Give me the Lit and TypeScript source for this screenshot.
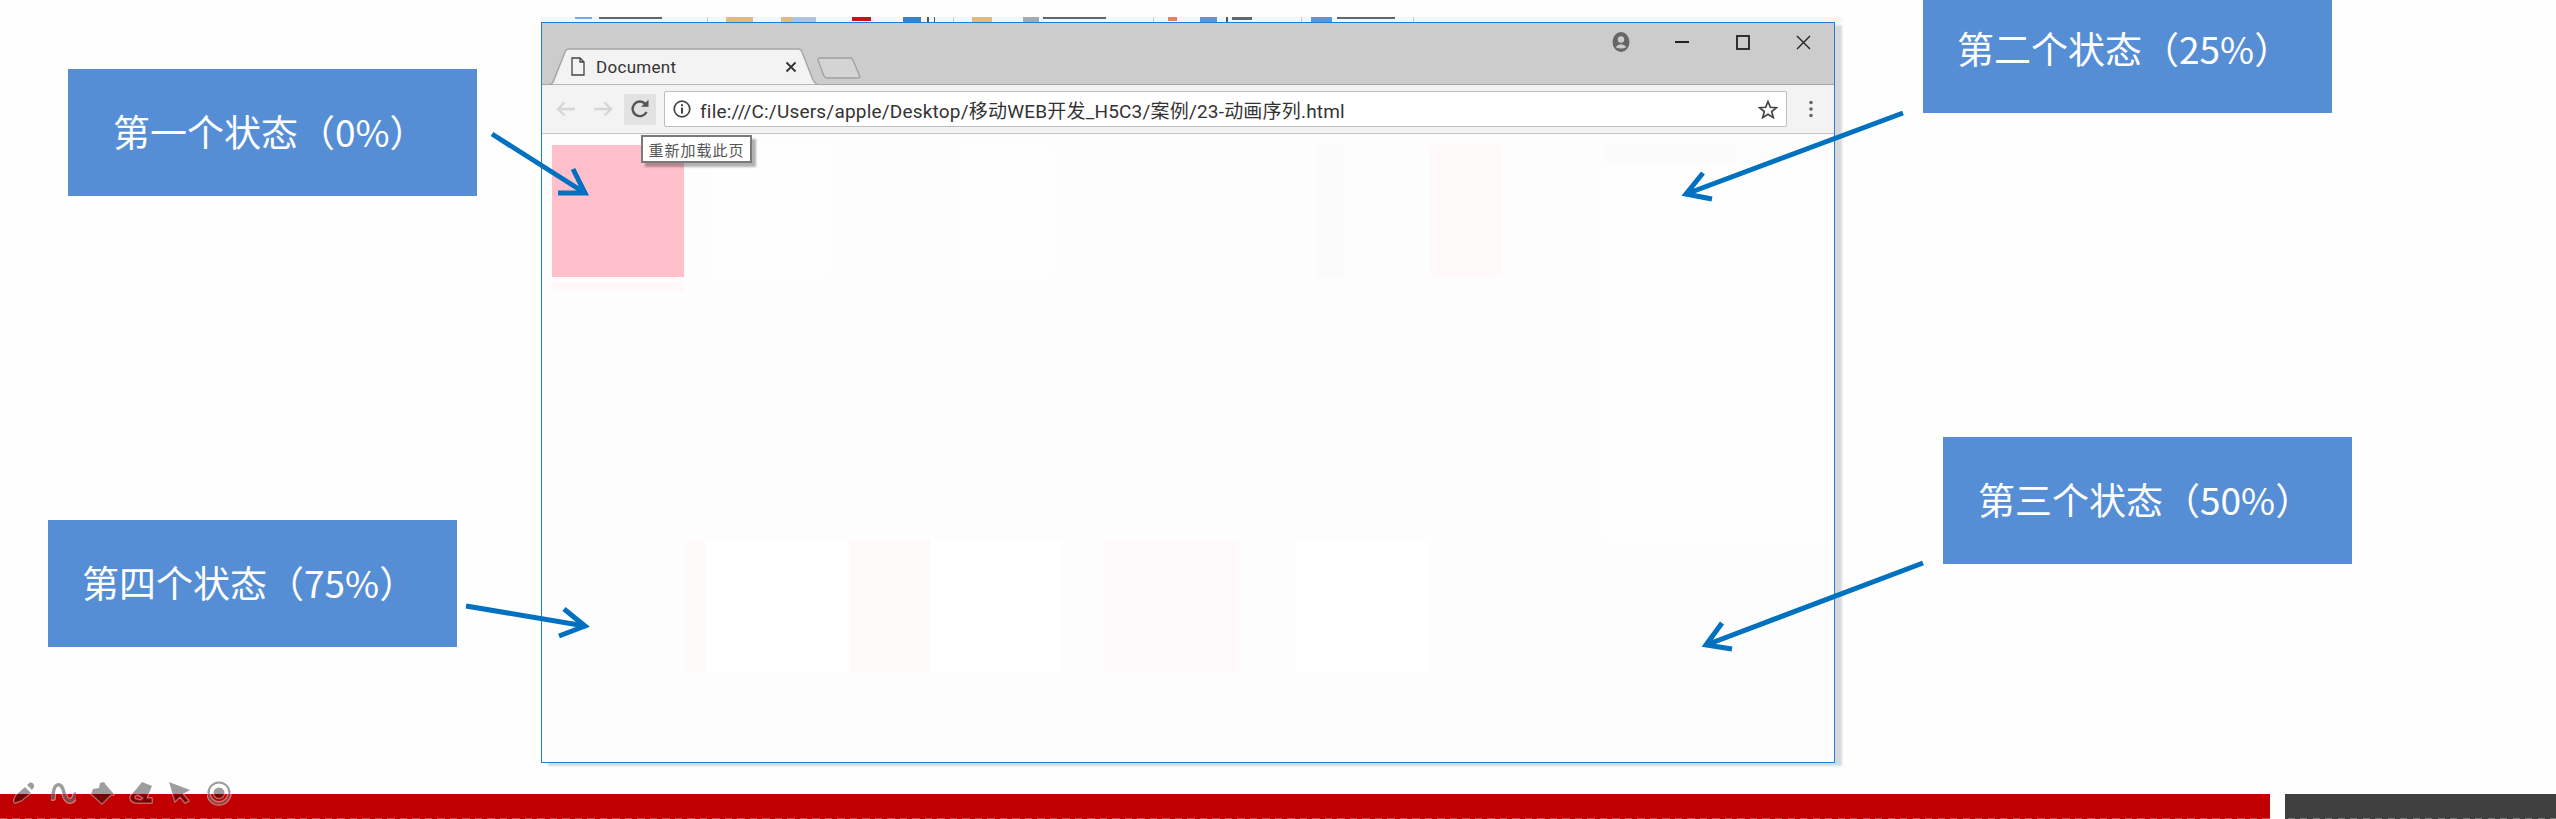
import { LitElement, html, css, svg } from "lit";
import { customElement } from "lit/decorators.js";

// faint leftovers of the animated box, page coordinates [x, y, w, h, colour]
const patches: [number, number, number, number, string][] = [
  [552, 145, 132, 132, "#ffc0cb"],
  [552, 282, 132, 9, "#fff8f8"],
  [711, 145, 117, 132, "#fefefe"],
  [963, 145, 88, 132, "#fefefe"],
  [1317, 145, 27, 132, "#fbfbfb"],
  [1430, 145, 72, 132, "#fffafa"],
  [1605, 145, 132, 18, "#fbfbfb"],
  [1605, 163, 229, 377, "#fefefe"],
  [684, 540, 21, 132, "#fffafa"],
  [705, 540, 144, 132, "#ffffff"],
  [849, 540, 81, 132, "#fffafa"],
  [930, 540, 131, 132, "#ffffff"],
  [1105, 540, 135, 132, "#fefafb"],
  [1295, 540, 133, 132, "#ffffff"],
];

// desktop bits peeking out above the browser window [x, w, h, colour]
const strip: [number, number, number, string][] = [
  [575, 17, 2, "#7fa8d8"],
  [599, 63, 2, "#666666"],
  [707, 1, 5, "#c8c8c8"],
  [726, 27, 5, "#e8b878"],
  [781, 12, 5, "#e8b878"],
  [793, 23, 5, "#a8c4e8"],
  [852, 19, 4, "#cc1111"],
  [903, 18, 5, "#2f86d0"],
  [927, 2, 5, "#555555"],
  [934, 1, 5, "#555555"],
  [953, 1, 5, "#c8c8c8"],
  [972, 20, 5, "#e8b878"],
  [1023, 16, 5, "#a8a8a8"],
  [1043, 63, 2, "#666666"],
  [1153, 1, 5, "#c8c8c8"],
  [1168, 9, 4, "#d88850"],
  [1200, 17, 5, "#5a96d8"],
  [1226, 2, 5, "#555555"],
  [1232, 20, 3, "#666666"],
  [1301, 1, 5, "#c8c8c8"],
  [1311, 21, 5, "#5a96d8"],
  [1337, 58, 2, "#666666"],
  [1413, 1, 5, "#c8c8c8"],
];

// shaft start, tip, two head ends
const arrows: number[][] = [
  [492, 134, 585, 193, 573, 169, 558, 193],
  [1903, 113, 1686, 194, 1703, 173, 1712, 199],
  [1923, 563, 1706, 645, 1722, 623, 1732, 649],
  [466, 606, 585, 626, 564, 609, 559, 636],
];

@customElement("app-root")
export class AppRoot extends LitElement {
  static styles = css`
    :host {
      display: flex;
      flex-direction: column;
      height: 819px;
      background: #fefefe;
      position: relative;
      overflow: hidden;
      font-family: "Noto Sans CJK SC", "Liberation Sans", sans-serif;
    }
    .stage {
      flex: 1;
      position: relative;
    }
    .strip {
      position: absolute;
      left: 541px;
      top: 17px;
      width: 1302px;
      height: 5px;
      background: #f6f6f6;
    }
    .strip i {
      position: absolute;
      top: 0;
    }
    .window {
      position: absolute;
      left: 541px;
      top: 22px;
      width: 1294px;
      height: 741px;
      box-sizing: border-box;
      border: 1px solid #1f7fd4;
      box-shadow: 7px 3px 2px rgba(0, 0, 0, 0.15);
      display: flex;
      flex-direction: column;
      background: #fdfdfd;
    }
    .tabbar {
      height: 62px;
      box-sizing: border-box;
      background: #cccccc;
      border-bottom: 1px solid #a6a6a6;
      display: flex;
      align-items: flex-end;
      padding-left: 6px;
      flex: none;
    }
    .tab {
      position: relative;
      width: 272px;
      height: 37px;
      margin-bottom: -1px;
      display: flex;
      align-items: center;
      padding: 0 23px;
      box-sizing: border-box;
      color: #333;
    }
    .tab > svg.shape {
      position: absolute;
      left: 0;
      top: 0;
    }
    .tab > * {
      position: relative;
    }
    .title {
      margin-left: 11px;
      font-family: Roboto, sans-serif;
      font-size: 17px;
      letter-spacing: 0.3px;
      flex: 1;
    }
    .newtab {
      margin: 0 0 5px -3px;
    }
    .controls {
      margin-left: auto;
      align-self: flex-start;
      display: grid;
      grid-template-columns: repeat(4, 61px);
      height: 38px;
      place-items: center;
    }
    .toolbar {
      height: 49px;
      flex: none;
      box-sizing: border-box;
      background: #f3f3f3;
      border-bottom: 1px solid #c4c4c4;
      display: flex;
      align-items: center;
      padding-left: 14px;
    }
    .nav {
      margin-right: 17px;
    }
    .reload {
      width: 32px;
      height: 31px;
      background: #e2e2e2;
      margin-left: -6px;
      display: grid;
      place-items: center;
      margin-right: 8px;
    }
    .address {
      width: 1123px;
      height: 36px;
      box-sizing: border-box;
      background: #fff;
      border: 1px solid #bdbdbd;
      border-radius: 2px;
      display: flex;
      align-items: center;
      padding: 0 8px;
    }
    .url {
      margin-left: 9px;
      flex: 1;
      font-family: Roboto, "Noto Sans CJK SC", sans-serif;
      font-size: 19px;
      letter-spacing: 0.2px;
      color: #333;
      white-space: nowrap;
    }
    .kebab {
      margin-left: 22px;
    }
    .content {
      flex: 1;
      position: relative;
    }
    .patch {
      position: absolute;
    }
    .tooltip {
      position: absolute;
      left: 99px;
      top: 1px;
      width: 111px;
      height: 28px;
      box-sizing: border-box;
      background: #fff;
      border: 2px solid #7a7a7a;
      box-shadow: 4px 4px 2px rgba(0, 0, 0, 0.3);
      display: flex;
      align-items: center;
      justify-content: center;
      font-size: 15px;
      letter-spacing: 1px;
      color: #555;
      white-space: nowrap;
    }
    .callout {
      position: absolute;
      width: 409px;
      height: 127px;
      box-sizing: border-box;
      background: #558ed5;
      color: #fff;
      font-size: 37px;
      display: flex;
      align-items: center;
      white-space: nowrap;
      padding-bottom: 3px;
    }
    .c1 {
      left: 68px;
      top: 69px;
      padding-left: 45px;
    }
    .c2 {
      left: 1923px;
      top: -14px;
      padding-left: 34px;
    }
    .c3 {
      left: 1943px;
      top: 437px;
      padding-left: 35px;
    }
    .c4 {
      left: 48px;
      top: 520px;
      padding-left: 34px;
    }
    .arrows {
      position: absolute;
      left: 0;
      top: 0;
      pointer-events: none;
    }
    .footer {
      flex: none;
      height: 25px;
      display: flex;
      background: #fefefe;
      position: relative;
    }
    .red {
      width: 2270px;
      background: #c00000;
    }
    .dark {
      margin-left: 15px;
      flex: 1;
      background: #404040;
    }
    .dashes {
      position: absolute;
      left: 0;
      right: 0;
      bottom: 0;
      height: 1px;
      background: repeating-linear-gradient(
        90deg,
        rgba(255, 255, 255, 0.3) 0 7px,
        transparent 7px 12.5px
      );
    }
    .pens {
      position: absolute;
      left: 12px;
      top: 781px;
      display: flex;
      gap: 14px;
    }
    .pens path,
    .pens circle {
      fill: rgba(0, 0, 0, 0.38);
      stroke: rgba(255, 255, 255, 0.45);
      stroke-width: 1.5;
      paint-order: stroke;
      stroke-linejoin: round;
    }
    .pens .wave-o {
      fill: none;
      stroke: rgba(255, 255, 255, 0.45);
      stroke-width: 6;
      stroke-linecap: round;
    }
    .pens .wave-i {
      fill: none;
      stroke: rgba(0, 0, 0, 0.38);
      stroke-width: 3.5;
      stroke-linecap: round;
    }
    .pens .ring-o {
      fill: none;
      stroke: rgba(255, 255, 255, 0.45);
      stroke-width: 4.5;
    }
    .pens .ring-i {
      fill: none;
      stroke: rgba(0, 0, 0, 0.38);
      stroke-width: 2;
    }
  `;

  private pen(inner: unknown) {
    return html`<svg width="25" height="25" viewBox="0 0 25 25">${inner}</svg>`;
  }

  render() {
    return html`
      <div class="stage">
        <div class="strip">
          ${strip.map(
            ([x, w, h, c]) =>
              html`<i
                style="left:${x - 541}px;width:${w}px;height:${h}px;background:${c}"
              ></i>`
          )}
        </div>

        <div class="window">
          <div class="tabbar">
            <div class="tab">
              <svg class="shape" width="272" height="37" viewBox="0 0 272 37">
                <path
                  d="M1 37 Q5 36 6 32 L17 4 Q18 1 21 1 L250 1 Q253 1 254 4 L265 32 Q267 36 271 37 Z"
                  fill="#f3f3f3"
                  stroke="#a6a6a6"
                  stroke-width="1.5"
                />
              </svg>
              <svg width="14" height="19" viewBox="0 0 14 19">
                <path
                  d="M1 1 H9 L13 5 V18 H1 Z M9 1 V5 H13"
                  fill="none"
                  stroke="#444"
                  stroke-width="1.3"
                />
              </svg>
              <span class="title">Document</span>
              <svg width="12" height="12" viewBox="0 0 12 12">
                <path
                  d="M1.5 1.5 L10.5 10.5 M10.5 1.5 L1.5 10.5"
                  stroke="#333"
                  stroke-width="1.8"
                />
              </svg>
            </div>
            <svg class="newtab" width="44" height="22" viewBox="0 0 44 22">
              <path
                d="M2 1 H33 Q35 1 36 3 L43 20 Q43 21 41 21 H10 Q8 21 7 19 L1 3 Q1 1 2 1 Z"
                fill="#d4d4d4"
                stroke="#a0a0a0"
                stroke-width="1.3"
              />
            </svg>
            <div class="controls">
              <svg width="18" height="20" viewBox="0 0 18 20">
                <ellipse cx="9" cy="10" rx="8.5" ry="10" fill="#666" />
                <circle cx="9" cy="7.5" r="3.2" fill="#ccc" />
                <path d="M3.5 15 Q9 9.5 14.5 15 Q9 18 3.5 15 Z" fill="#ccc" />
              </svg>
              <svg width="14" height="2" viewBox="0 0 14 2">
                <rect width="14" height="2" fill="#222" />
              </svg>
              <svg width="14" height="15" viewBox="0 0 14 15">
                <rect
                  x="1"
                  y="1"
                  width="12"
                  height="13"
                  fill="none"
                  stroke="#222"
                  stroke-width="1.8"
                />
              </svg>
              <svg width="15" height="15" viewBox="0 0 15 15">
                <path
                  d="M1 1 L14 14 M14 1 L1 14"
                  stroke="#222"
                  stroke-width="1.4"
                />
              </svg>
            </div>
          </div>

          <div class="toolbar">
            <svg class="nav" width="20" height="16" viewBox="0 0 20 16">
              <path
                d="M19 8 H2 M8.5 1.5 L2 8 L8.5 14.5"
                fill="none"
                stroke="#d6d6d6"
                stroke-width="2.4"
              />
            </svg>
            <svg class="nav" width="20" height="16" viewBox="0 0 20 16">
              <path
                d="M1 8 H18 M11.5 1.5 L18 8 L11.5 14.5"
                fill="none"
                stroke="#d6d6d6"
                stroke-width="2.4"
              />
            </svg>
            <div class="reload">
              <svg width="20" height="20" viewBox="0 0 20 20">
                <path
                  d="M16.5 13 A7.3 7.3 0 1 1 15.2 4.8"
                  fill="none"
                  stroke="#555"
                  stroke-width="2.4"
                />
                <path d="M11 7.8 H18.5 V0.8 Z" fill="#555" />
              </svg>
            </div>
            <div class="address">
              <svg width="18" height="18" viewBox="0 0 18 18">
                <circle
                  cx="9"
                  cy="9"
                  r="7.8"
                  fill="none"
                  stroke="#444"
                  stroke-width="1.7"
                />
                <rect x="8" y="7.6" width="2" height="6" fill="#444" />
                <rect x="8" y="4.2" width="2" height="2" fill="#444" />
              </svg>
              <span class="url"
                >file:///C:/Users/apple/Desktop/移动WEB开发_H5C3/案例/23-动画序列.html</span
              >
              <svg width="20" height="19" viewBox="0 0 20 19">
                <path
                  d="M10 1.5 L12.3 7.3 L18.5 7.7 L13.7 11.6 L15.3 17.6 L10 14.3 L4.7 17.6 L6.3 11.6 L1.5 7.7 L7.7 7.3 Z"
                  fill="none"
                  stroke="#444"
                  stroke-width="1.7"
                />
              </svg>
            </div>
            <svg class="kebab" width="4" height="18" viewBox="0 0 4 18">
              <circle cx="2" cy="2.5" r="1.8" fill="#666" />
              <circle cx="2" cy="9" r="1.8" fill="#666" />
              <circle cx="2" cy="15.5" r="1.8" fill="#666" />
            </svg>
          </div>

          <div class="content">
            ${patches.map(
              ([x, y, w, h, c]) =>
                html`<div
                  class="patch"
                  style="left:${x - 542}px;top:${y - 134}px;width:${w}px;height:${h}px;background:${c}"
                ></div>`
            )}
            <div class="tooltip">重新加载此页</div>
          </div>
        </div>

        <div class="callout c1">第一个状态（0%）</div>
        <div class="callout c2">第二个状态（25%）</div>
        <div class="callout c3">第三个状态（50%）</div>
        <div class="callout c4">第四个状态（75%）</div>
      </div>

      <div class="footer">
        <div class="red"></div>
        <div class="dark"></div>
        <div class="dashes"></div>
      </div>

      <svg class="arrows" width="2556" height="819" viewBox="0 0 2556 819">
        ${arrows.map(
          ([x1, y1, x2, y2, ax, ay, bx, by]) => svg`
            <path
              d="M${x1} ${y1} L${x2} ${y2} M${ax} ${ay} L${x2} ${y2} L${bx} ${by}"
              fill="none"
              stroke="#0070c0"
              stroke-width="5"
              stroke-linejoin="miter"
            />`
        )}
      </svg>

      <div class="pens">
        ${this.pen(svg`
          <path d="M3 22 Q1 21 2 18 L4 14 L13 6 L19 12 L9 20 Z" />
          <path d="M15 4 L18 1.5 Q19.5 1 21 2.5 Q23 4.5 22 6 L20 9 Z" />`)}
        ${this.pen(svg`
          <path class="wave-o" d="M2 17 Q2 6 6 4 Q11 2 13 12 Q15 20 19 20 Q24 19 24 13" />
          <path class="wave-i" d="M2 17 Q2 6 6 4 Q11 2 13 12 Q15 20 19 20 Q24 19 24 13" />`)}
        ${this.pen(svg`
          <path d="M10 2 L14 1 L16 4 L23 12 L24 14 L21 14 L12 23 L1 13 L3 8 L9 7 Z" />`)}
        ${this.pen(svg`
          <path fill-rule="evenodd" d="M13 1 L23 5 L18 17 L23 17 L23 22 L8 22 Q2 22 1 17 Q1 14 4 12 Z M6 15 Q5 17 7 18 L12 19 L14 17 L9 14 Z" />`)}
        ${this.pen(svg`
          <path d="M1 1 L22 9 L15 13 L21 20 L17 22 L12 16 L7 21 Z" />`)}
        ${this.pen(svg`
          <circle class="ring-o" cx="12" cy="12" r="10.5" />
          <circle class="ring-i" cx="12" cy="12" r="10.5" />
          <circle cx="12" cy="12" r="5.5" />`)}
      </div>
    `;
  }
}
